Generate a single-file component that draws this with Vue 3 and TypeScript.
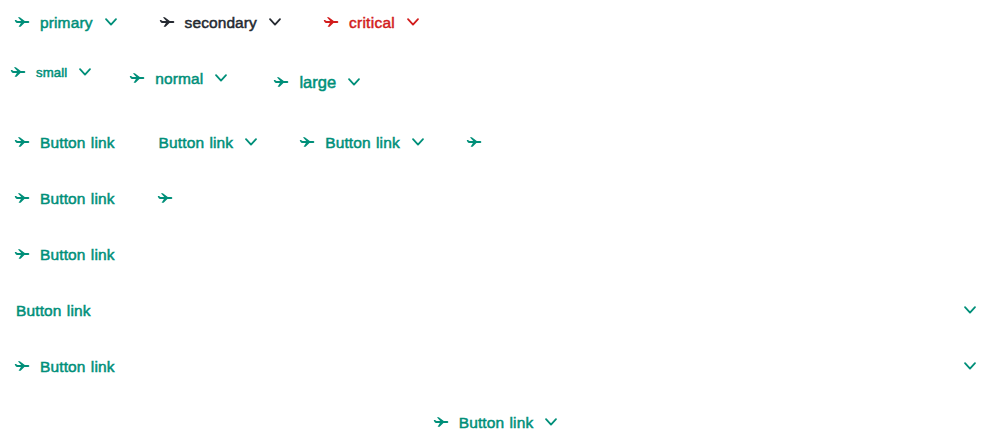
<script setup lang="ts">
interface LinkItem {
  label?: string
  tone?: 'primary' | 'secondary' | 'critical'
  size?: 'small' | 'normal' | 'large'
  prefix?: boolean
  suffix?: boolean
  full?: boolean
  centered?: boolean
}

const rows: LinkItem[][] = [
  [
    { label: 'primary', prefix: true, suffix: true },
    { label: 'secondary', tone: 'secondary', prefix: true, suffix: true },
    { label: 'critical', tone: 'critical', prefix: true, suffix: true },
  ],
  [
    { label: 'small', size: 'small', prefix: true, suffix: true },
    { label: 'normal', prefix: true, suffix: true },
    { label: 'large', size: 'large', prefix: true, suffix: true },
  ],
  [
    { label: 'Button link', prefix: true },
    { label: 'Button link', suffix: true },
    { label: 'Button link', prefix: true, suffix: true },
    { prefix: true },
  ],
  [{ label: 'Button link', prefix: true }, { prefix: true }],
  [{ label: 'Button link', prefix: true, full: true }],
  [{ label: 'Button link', suffix: true, full: true }],
  [{ label: 'Button link', prefix: true, suffix: true, full: true }],
  [{ label: 'Button link', prefix: true, suffix: true, full: true, centered: true }],
]

function classes(item: LinkItem) {
  return [
    item.tone ?? 'primary',
    item.size ?? 'normal',
    {
      'has-prefix': item.prefix,
      'has-suffix': item.suffix,
      'icon-only': !item.label,
      full: item.full,
      centered: item.centered,
    },
  ]
}
</script>

<template>
  <main class="page">
    <div v-for="(row, r) in rows" :key="r" class="row">
      <button v-for="(item, i) in row" :key="i" type="button" class="link" :class="classes(item)">
        <svg v-if="item.prefix" class="icon" viewBox="0 0 20 20" aria-hidden="true">
          <path
            d="M2.7 7.9H4L5.5 9.1H9.2L5.9 5.2H7.8L12.8 9.1H15.7C16.8 9.1 17.3 9.5 17.3 10.1S16.8 11.1 15.7 11.1H12.4L8.6 14.8H6.6L8.9 11.1H6.1C4.4 11 3.3 10.3 2.7 7.9Z"
          />
        </svg>
        <span v-if="item.label" class="label">{{ item.label }}</span>
        <svg v-if="item.suffix" class="icon" viewBox="0 0 20 20" aria-hidden="true">
          <path class="chevron" d="M5 7.2L10 12.6L15 7.2" />
        </svg>
      </button>
    </div>
  </main>
</template>

<style>
body {
  margin: 0;
  background: #fff;
}
</style>

<style scoped>
.page {
  display: flex;
  flex-direction: column;
  gap: 12px;
}
.row {
  display: flex;
  align-items: flex-start;
  gap: 12px;
}
.link {
  box-sizing: border-box;
  display: flex;
  align-items: center;
  gap: 8px;
  height: 44px;
  margin: 0;
  padding: 0 16px;
  border: 0;
  background: transparent;
  color: #008f79;
  font-family: 'Liberation Sans', Arial, sans-serif;
  font-size: 15.5px;
  letter-spacing: 0.13px;
  word-spacing: 0.8px;
  line-height: 20px;
  text-align: left;
}
.has-prefix {
  padding-left: 12px;
}
.has-suffix {
  padding-right: 12px;
}
.secondary {
  color: #252a31;
  letter-spacing: 0.09px;
}
.critical {
  color: #d21c1c;
  letter-spacing: 0.28px;
}
.small {
  height: 32px;
  padding: 0 8px;
  font-size: 13.2px;
  letter-spacing: 0.1px;
}
.large {
  height: 52px;
  padding: 0 16px;
  font-size: 16.5px;
  letter-spacing: 0;
}
.icon-only {
  width: 44px;
  padding: 0;
  justify-content: center;
}
.full {
  width: 100%;
}
.label {
  padding-top: 1px;
  -webkit-text-stroke: 0.5px currentColor;
  white-space: nowrap;
}
.large .label {
  padding-top: 0;
}
.full .label {
  flex: 1;
}
.centered {
  justify-content: center;
}
.centered .label {
  flex: none;
}
.icon {
  display: block;
  flex: none;
  width: 20px;
  height: 20px;
  fill: currentColor;
}
.chevron {
  fill: none;
  stroke: currentColor;
  stroke-width: 1.8;
  stroke-linecap: round;
  stroke-linejoin: round;
}
</style>
